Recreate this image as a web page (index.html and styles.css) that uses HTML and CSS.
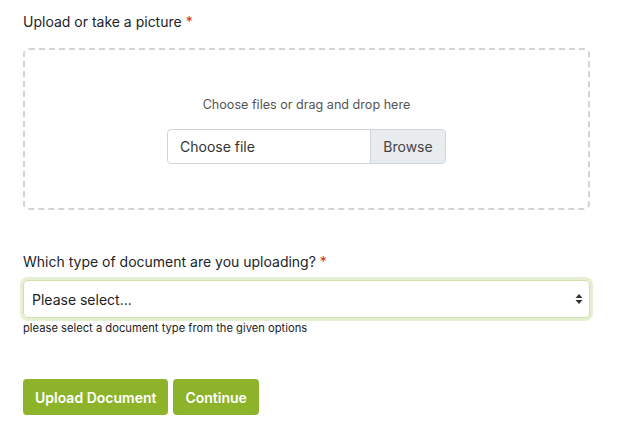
FILE: index.html
```html
<!DOCTYPE html>
<html>
<head>
<meta charset="utf-8">
<link rel="stylesheet" href="styles.css">
</head>
<body>
<form class="form">
  <div class="field">
    <label class="label">Upload or take a picture <span class="req">*</span></label>
    <div class="dropzone">
      <p class="drop-text">Choose files or drag and drop here</p>
      <div class="file-input">
        <span class="file-name">Choose file</span>
        <span class="file-browse">Browse</span>
      </div>
    </div>
  </div>
  <div class="field field-select">
    <label class="label">Which type of document are you uploading? <span class="req">*</span></label>
    <div class="select">
      <span class="select-value">Please select...</span>
      <svg class="select-arrows" width="8" height="12" viewBox="0 0 8 12"><path d="M4 1 L7.5 5 H0.5 Z" fill="#333"/><path d="M4 11 L7.5 7 H0.5 Z" fill="#333"/></svg>
    </div>
    <p class="help">please select a document type from the given options</p>
  </div>
  <div class="actions">
    <button type="button" class="btn">Upload Document</button>
    <button type="button" class="btn">Continue</button>
  </div>
</form>
</body>
</html>
```
FILE: styles.css
```css
html, body { margin: 0; padding: 0; background: #fff; }
body {
  font-family: Inter, "Liberation Sans", sans-serif;
  color: #212529;
}
.form { padding: 13px 32px 0 23px; display: flex; flex-direction: column; }
.label { display: block; font-size: 14px; line-height: 18px; color: #212529; }
.req { color: #d32f2f; }
.dropzone {
  margin-top: 17px;
  border: 2px dashed #d4d4d4;
  border-radius: 6px;
  display: flex;
  flex-direction: column;
  align-items: center;
  box-sizing: border-box;
  height: 162px;
}
.drop-text { margin: 47px 0 0; font-size: 12.6px; line-height: 16px; color: #555; }
.file-input {
  margin-top: 16px;
  width: 279px;
  height: 35px;
  box-sizing: border-box;
  border: 1px solid #ced4da;
  border-radius: 4px;
  display: flex;
  overflow: hidden;
  font-size: 14px;
}
.file-name { flex: 1; display: flex; align-items: center; padding-left: 12px; color: #333; }
.file-browse {
  width: 74px;
  background: #e9ecef;
  border-left: 1px solid #ced4da;
  display: flex; align-items: center; justify-content: center;
  color: #444;
}
.field-select { margin-top: 43px; }
.select {
  margin-top: 9px;
  height: 38px;
  box-sizing: border-box;
  border: 1px solid #cfe0a8;
  border-radius: 5px;
  box-shadow: 0 0 0 3px #e6efd3;
  display: flex;
  align-items: center;
  justify-content: space-between;
  padding: 0 6px 0 8px;
  font-size: 14px;
  color: #222;
  width: 567px;
}
.help { margin: 3px 0 0; font-size: 11.2px; line-height: 14px; color: #222; }
.actions { margin-top: 44px; display: flex; gap: 5px; }
.btn {
  background: #8db32b;
  color: #fff;
  border: none;
  border-radius: 4px;
  height: 36px;
  padding: 0 12px;
  font-family: Inter, "Liberation Sans", sans-serif;
  font-weight: 600;
  font-size: 14px;
}
```
